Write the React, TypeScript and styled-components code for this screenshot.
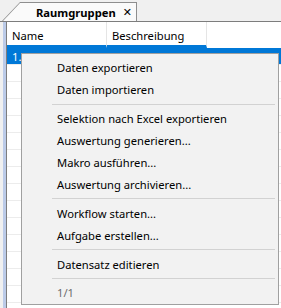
import React from "react";
import styled, { createGlobalStyle } from "styled-components";

const Global = createGlobalStyle`
  html, body { margin: 0; padding: 0; }
  body { background: #f0f0f0; font-family: "Noto Sans", "Open Sans", sans-serif; }
`;

const Root = styled.div`
  position: relative;
  width: 281px;
  height: 308px;
  overflow: hidden;
  background: #f0f0f0;
  display: flex;
  flex-direction: column;
  font-size: 11.2px;
  color: #000;
`;

const TabStrip = styled.div`
  height: 21px;
  padding: 2px 0 0 2px;
  box-sizing: border-box;
  display: flex;
  align-items: flex-end;
`;

const TabOuter = styled.div`
  width: 135px;
  height: 19px;
  background: #8e8e8e;
  padding: 1px 1px 0 1px;
  box-sizing: border-box;
  clip-path: polygon(0 100%, 18px 0, 100% 0, 100% 100%);
`;

const TabInner = styled.div`
  height: 100%;
  background: #fafafa;
  clip-path: polygon(0 100%, 17px 0, 100% 0, 100% 100%);
  display: flex;
  align-items: center;
  padding-left: 33px;
  gap: 7px;
  font-weight: bold;
  font-size: 11.2px;
  white-space: nowrap;
`;

const Close = styled.span`
  font-family: "DejaVu Sans", sans-serif;
  font-size: 11px;
  font-weight: bold;
  line-height: 1;
`;

const Band = styled.div`
  height: 3px;
  background: #c8d5ee;
  border-bottom: 1px solid #7d7d7d;
`;

const Panel = styled.div`
  flex: 1;
  display: flex;
  padding-left: 3px;
`;

const Body = styled.div`
  flex: 1;
  background: #fff;
  border-left: 3px solid #bccbe8;
  box-shadow: inset 1px 0 0 #7d7d7d;
  padding-left: 1px;
  display: flex;
  flex-direction: column;
`;

const HeaderRow = styled.div`
  display: flex;
  height: 26px;
`;

const HeaderCell = styled.div`
  width: 100px;
  box-sizing: border-box;
  padding: 4px 0 0 5px;
  display: flex;
  align-items: center;
  border-right: 1px solid #e5e5e5;
  border-bottom: 3px solid #0078d7;
`;

const Row = styled.div<{ $selected?: boolean }>`
  height: 17px;
  box-sizing: border-box;
  border-bottom: 1px solid #ececec;
  background: ${(p) => (p.$selected ? "#0078d7" : "#fff")};
  color: ${(p) => (p.$selected ? "#fff" : "#000")};
  padding-left: 5px;
  display: flex;
  align-items: center;
`;

const Menu = styled.div`
  position: absolute;
  left: 21px;
  top: 53px;
  width: 258px;
  height: 252px;
  box-sizing: border-box;
  background: #f2f2f2;
  border: 1px solid #a0a0a0;
  padding: 3px 2px 0 2px;
  display: flex;
  flex-direction: column;
`;

const Item = styled.div<{ $disabled?: boolean }>`
  height: 22px;
  display: flex;
  align-items: center;
  padding-left: 33px;
  color: ${(p) => (p.$disabled ? "#6d6d6d" : "#000")};
  white-space: nowrap;
`;

const Sep = styled.div`
  height: 7px;
  display: flex;
  align-items: center;
  padding-left: 28px;
  padding-right: 1px;
  &::after {
    content: "";
    flex: 1;
    height: 1px;
    background: #d2d2d2;
  }
`;

const menu: (string | null)[] = [
  "Daten exportieren",
  "Daten importieren",
  null,
  "Selektion nach Excel exportieren",
  "Auswertung generieren...",
  "Makro ausführen...",
  "Auswertung archivieren...",
  null,
  "Workflow starten...",
  "Aufgabe erstellen...",
  null,
  "Datensatz editieren",
  null,
];

export default function App() {
  return (
    <>
      <Global />
      <Root>
        <TabStrip>
          <TabOuter>
            <TabInner>
              <span>Raumgruppen</span>
              <Close>✕</Close>
            </TabInner>
          </TabOuter>
        </TabStrip>
        <Band />
        <Panel>
          <Body>
            <HeaderRow>
              <HeaderCell>Name</HeaderCell>
              <HeaderCell>Beschreibung</HeaderCell>
            </HeaderRow>
            <Row $selected>1.</Row>
            {Array.from({ length: 15 }).map((_, i) => (
              <Row key={i} />
            ))}
          </Body>
        </Panel>
        <Menu>
          {menu.map((m, i) => (m === null ? <Sep key={i} /> : <Item key={i}>{m}</Item>))}
          <Item $disabled>1/1</Item>
        </Menu>
      </Root>
    </>
  );
}
